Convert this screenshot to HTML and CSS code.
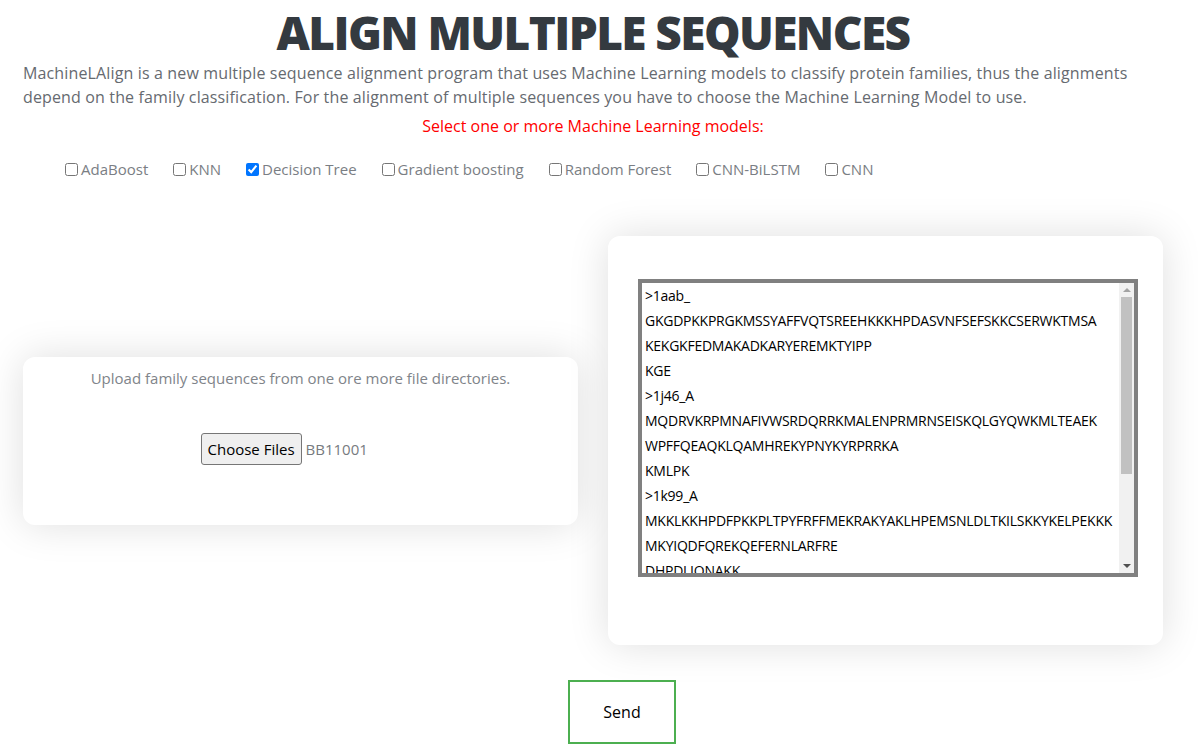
FILE: index.html
```html
<!DOCTYPE html>
<html lang="en">
<head>
<meta charset="utf-8">
<title>Align Multiple Sequences</title>
<link rel="stylesheet" href="styles.css">
</head>
<body>
<div class="container">
  <h1 class="title">ALIGN MULTIPLE SEQUENCES</h1>
  <p class="intro">MachineLAlign is a new multiple sequence alignment program that uses Machine Learning models to classify protein families, thus the alignments depend on the family classification. For the alignment of multiple sequences you have to choose the Machine Learning Model to use.</p>
  <p class="hint">Select one or more Machine Learning models:</p>
  <div class="models">
    <label class="model"><input type="checkbox">AdaBoost</label>
    <label class="model"><input type="checkbox">KNN</label>
    <label class="model"><input type="checkbox" checked>Decision Tree</label>
    <label class="model"><input type="checkbox">Gradient boosting</label>
    <label class="model"><input type="checkbox">Random Forest</label>
    <label class="model"><input type="checkbox">CNN-BiLSTM</label>
    <label class="model"><input type="checkbox">CNN</label>
  </div>
  <div class="panels">
    <div class="card upload-card">
      <p class="upload-text">Upload family sequences from one ore more file directories.</p>
      <div class="file-row">
        <button class="file-btn" type="button">Choose Files</button>
        <span class="file-name">BB11001</span>
      </div>
    </div>
    <div class="card text-card">
      <div class="seq-box">
        <textarea class="seq" wrap="off" spellcheck="false">&gt;1aab_
GKGDPKKPRGKMSSYAFFVQTSREEHKKKHPDASVNFSEFSKKCSERWKTMSA
KEKGKFEDMAKADKARYEREMKTYIPP
KGE
&gt;1j46_A
MQDRVKRPMNAFIVWSRDQRRKMALENPRMRNSEISKQLGYQWKMLTEAEK
WPFFQEAQKLQAMHREKYPNYKYRPRRKA
KMLPK
&gt;1k99_A
MKKLKKHPDFPKKPLTPYFRFFMEKRAKYAKLHPEMSNLDLTKILSKKYKELPEKKK
MKYIQDFQREKQEFERNLARFRE
DHPDLIQNAKK
&gt;2lef_A
MHIKKPLNAFMLYMKEMRANVVAECTLKESAAINQILGRRWHALSREEQ
AKYYELARKERQLHMQLYPGWSARDNYGKKKKRKREK
&gt;1hry_A
VQDRVKRPMNAFIVWSRDQRRKMALENPRMRNSEISKQLGYQWKMLTEAEK
</textarea>
        <div class="scrollbar">
          <div class="arrow arrow-up"></div>
          <div class="track"><div class="thumb"></div></div>
          <div class="arrow arrow-down"></div>
        </div>
      </div>
    </div>
  </div>
  <div class="actions">
    <button class="send" type="button">Send</button>
  </div>
</div>
</body>
</html>
```

FILE: styles.css
```css
html, body {
  margin: 0;
  padding: 0;
  background: #ffffff;
}
body {
  font-family: "Open Sans", "Noto Sans", sans-serif;
  color: #666a70;
}
.container {
  width: 1140px;
  margin-left: 23px;
}
.title {
  margin: 0;
  padding-top: 4px;
  text-align: center;
  font-size: 46px;
  line-height: 56px;
  font-weight: 800;
  color: #343a40;
  letter-spacing: -1.6px;
}
.intro {
  margin: 0;
  padding-top: 1px;
  font-size: 16px;
  line-height: 24px;
  letter-spacing: 0.14px;
  color: #666a70;
}
.hint {
  margin: 5px 0 0 0;
  text-align: center;
  font-size: 16px;
  line-height: 24px;
  color: #ff0000;
}
.models {
  display: flex;
  gap: 24px;
  padding-left: 41px;
  margin-top: 19px;
}
.model {
  display: flex;
  align-items: center;
  font-size: 15px;
  line-height: 24px;
  color: #7a7e84;
}
.model input {
  margin: 0 3px 0 1px;
  width: 13px;
  height: 13px;
}
.panels {
  display: flex;
  justify-content: space-between;
  align-items: center;
  margin-top: 55px;
}
.card {
  background: #ffffff;
  border-radius: 12px;
  box-shadow: 0 0 40px rgba(0, 0, 0, 0.13);
  box-sizing: border-box;
}
.upload-card {
  width: 555px;
  height: 168px;
  padding-top: 10px;
}
.upload-text {
  margin: 0;
  text-align: center;
  font-size: 15px;
  line-height: 22px;
  color: #80848a;
}
.file-row {
  display: flex;
  align-items: center;
  width: 200px;
  margin: 44px auto 0 auto;
  white-space: nowrap;
}
.file-btn {
  font-family: "Open Sans", "Noto Sans", sans-serif;
  font-size: 15px;
  color: #000000;
  background: #efefef;
  border: 1px solid #767676;
  border-radius: 3px;
  height: 32px;
  padding: 0 6px;
  margin-right: 4px;
}
.file-name {
  font-size: 15px;
  color: #777b80;
}
.text-card {
  width: 555px;
  height: 409px;
  padding: 43px 25px 0 30px;
}
.seq-box {
  display: flex;
  box-sizing: border-box;
  width: 500px;
  height: 298px;
  border: 4px solid #808080;
  background: #ffffff;
}
.seq {
  flex: 1;
  min-width: 0;
  box-sizing: border-box;
  height: 100%;
  border: none;
  padding: 0 3px;
  margin: 0;
  font-family: "Open Sans", "Noto Sans", sans-serif;
  font-size: 14px;
  line-height: 25px;
  letter-spacing: -0.25px;
  color: #000000;
  resize: none;
  overflow: hidden;
  outline: none;
  background: #ffffff;
}
.scrollbar {
  width: 15px;
  display: flex;
  flex-direction: column;
  background: #f1f1f1;
}
.arrow {
  height: 14px;
  display: flex;
  align-items: center;
  justify-content: center;
}
.arrow-up::before {
  content: "";
  border-left: 4px solid transparent;
  border-right: 4px solid transparent;
  border-bottom: 4px solid #a3a3a3;
}
.arrow-down::before {
  content: "";
  border-left: 4px solid transparent;
  border-right: 4px solid transparent;
  border-top: 4px solid #505050;
}
.track {
  flex: 1;
  padding: 0 2px;
}
.thumb {
  height: 177px;
  background: #c1c1c1;
}
.actions {
  display: flex;
  padding-left: 545px;
  margin-top: 35px;
}
.send {
  width: 108px;
  height: 64px;
  background: #ffffff;
  border: 2px solid #4caf50;
  font-family: "Open Sans", "Noto Sans", sans-serif;
  font-size: 16px;
  color: #000000;
}
```
